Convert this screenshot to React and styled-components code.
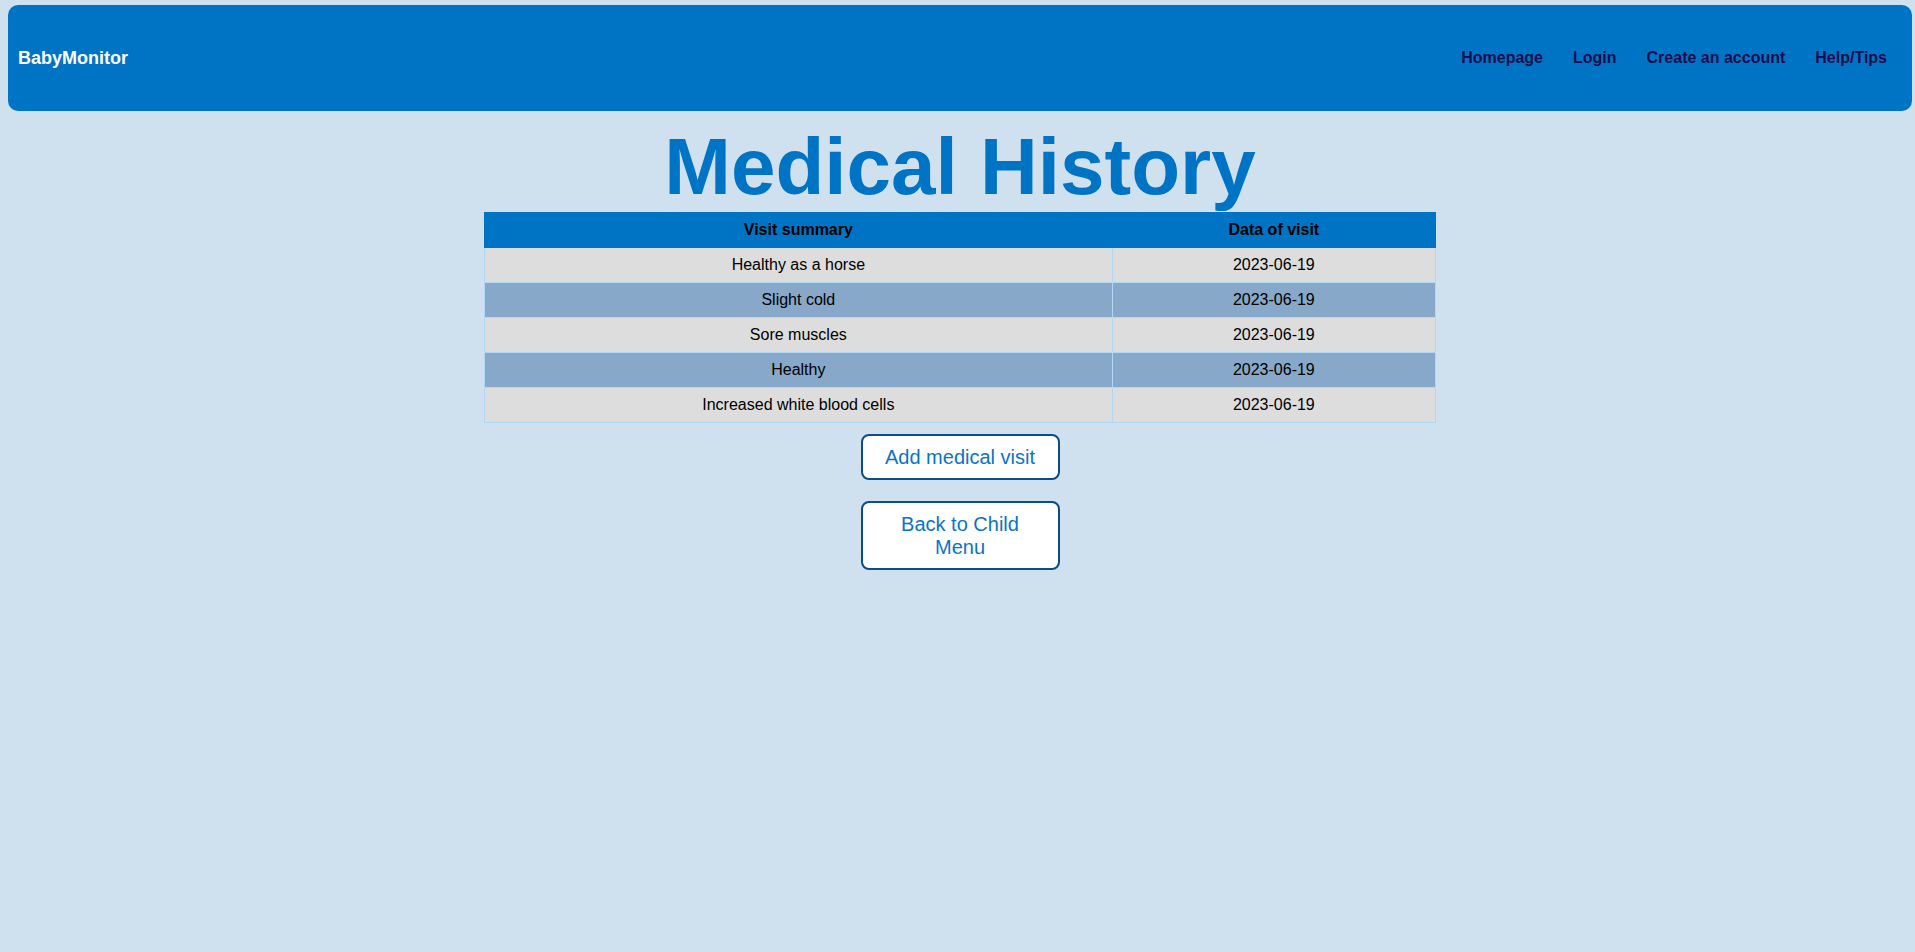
import React from "react";
import styled, { createGlobalStyle } from "styled-components";

const GlobalStyle = createGlobalStyle`
  html, body {
    margin: 0;
    padding: 0;
    background: #cfe0ef;
    font-family: "Liberation Sans", Arial, sans-serif;
  }
  #root {
    min-height: 952px;
  }
`;

const Page = styled.div`
  padding: 5px 3px 0 8px;
`;

const NavBar = styled.nav`
  height: 106px;
  background: #0074c4;
  border-radius: 10px;
  display: flex;
  align-items: center;
  justify-content: space-between;
  padding: 0 10px;
  box-sizing: border-box;
`;

const Brand = styled.a`
  color: #ffffff;
  font-weight: bold;
  font-size: 18px;
  text-decoration: none;
`;

const NavList = styled.ul`
  display: flex;
  list-style: none;
  margin: 0;
  padding: 0;
`;

const NavLink = styled.a`
  display: block;
  padding: 0 15px;
  color: #1b0c4f;
  font-weight: bold;
  font-size: 16px;
  text-decoration: none;
`;

const Main = styled.main`
  display: flex;
  flex-direction: column;
  align-items: center;
`;

const Title = styled.h1`
  margin: 11px 0 0;
  font-size: 80px;
  line-height: 90px;
  font-weight: bold;
  color: #0074c4;
  text-align: center;
`;

const Table = styled.table`
  width: 50%;
  border-collapse: collapse;
  font-size: 16px;
`;

const HeadCell = styled.th`
  background: #0074c4;
  color: #000;
  font-weight: bold;
  padding: 8px;
  border: 1px solid #0074c4;
  text-align: center;
  width: ${(p) => p.$w || "auto"};
`;

const Row = styled.tr`
  background: ${(p) => (p.$alt ? "#87a8c8" : "#dddddd")};
`;

const Cell = styled.td`
  padding: 8px;
  border: 1px solid #b0d8f5;
  text-align: center;
  color: #000;
`;

const ButtonGroup = styled.div`
  display: flex;
  flex-direction: column;
  align-items: center;
  gap: 21px;
  margin-top: 11px;
`;

const ActionButton = styled.button`
  width: 199px;
  box-sizing: border-box;
  padding: 9.5px 20px;
  background: #ffffff;
  border: 2px solid #0a4d88;
  border-radius: 8px;
  color: #0a74c4;
  font-family: "Liberation Sans", Arial, sans-serif;
  font-size: 20px;
  line-height: 23px;
  text-align: center;
  cursor: pointer;
`;

const visits = [
  { summary: "Healthy as a horse", date: "2023-06-19" },
  { summary: "Slight cold", date: "2023-06-19" },
  { summary: "Sore muscles", date: "2023-06-19" },
  { summary: "Healthy", date: "2023-06-19" },
  { summary: "Increased white blood cells", date: "2023-06-19" },
];

export default function App() {
  return (
    <>
      <GlobalStyle />
      <Page>
        <NavBar>
          <Brand href="#">BabyMonitor</Brand>
          <NavList>
            <li><NavLink href="#">Homepage</NavLink></li>
            <li><NavLink href="#">Login</NavLink></li>
            <li><NavLink href="#">Create an account</NavLink></li>
            <li><NavLink href="#">Help/Tips</NavLink></li>
          </NavList>
        </NavBar>
        <Main>
          <Title>Medical History</Title>
          <Table>
            <thead>
              <tr>
                <HeadCell $w="66%">Visit summary</HeadCell>
                <HeadCell>Data of visit</HeadCell>
              </tr>
            </thead>
            <tbody>
              {visits.map((v, i) => (
                <Row key={i} $alt={i % 2 === 1}>
                  <Cell>{v.summary}</Cell>
                  <Cell>{v.date}</Cell>
                </Row>
              ))}
            </tbody>
          </Table>
          <ButtonGroup>
            <ActionButton>Add medical visit</ActionButton>
            <ActionButton>Back to Child Menu</ActionButton>
          </ButtonGroup>
        </Main>
      </Page>
    </>
  );
}
